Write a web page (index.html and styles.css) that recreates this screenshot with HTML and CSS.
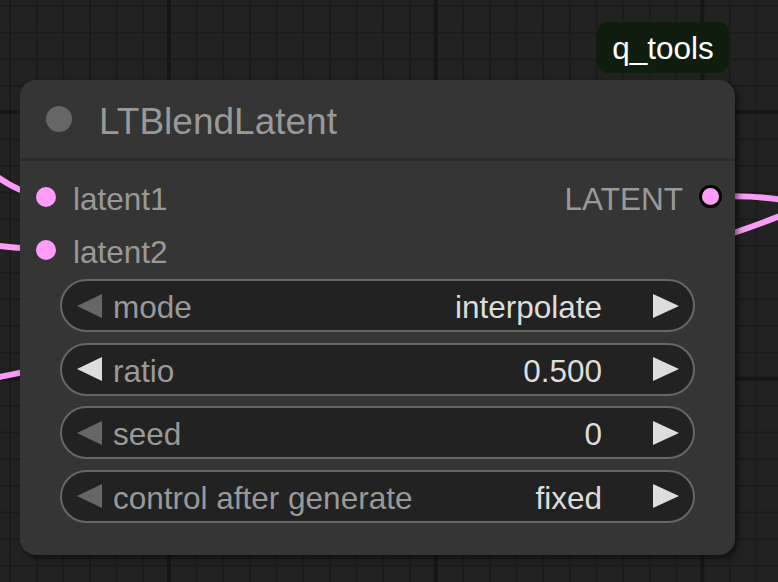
FILE: index.html
```html
<!DOCTYPE html>
<html>
<head>
<meta charset="utf-8">
<link rel="stylesheet" href="styles.css">
</head>
<body>
<div class="canvas">
  <svg class="wires" width="778" height="582" viewBox="0 0 778 582">
    <path d="M -30 158 C -5 174, 10 190, 40 196" />
    <path d="M -10 245 C 10 247, 25 249, 40 249" />
    <path d="M -10 379 C 10 375, 25 371, 40 370" />
    <path d="M 711 196 C 740 196, 760 196, 790 201" />
    <path d="M 711 240 C 735 233, 760 224, 790 212" />
  </svg>

  <div class="badge">q_tools</div>

  <div class="node">
    <div class="node-title">
      <span class="title-dot"></span>
      <span class="title-text">LTBlendLatent</span>
    </div>
    <div class="node-body">
      <div class="slot-row">
        <div class="slot-in"><span class="dot"></span><span class="slot-label">latent1</span></div>
        <div class="slot-out"><span class="slot-label">LATENT</span><span class="dot dot-out"></span></div>
      </div>
      <div class="slot-row">
        <div class="slot-in"><span class="dot"></span><span class="slot-label">latent2</span></div>
      </div>
      <div class="widgets">
        <div class="widget">
          <span class="arrow-left dim"></span>
          <span class="w-label">mode</span>
          <span class="w-value">interpolate</span>
          <span class="arrow-right"></span>
        </div>
        <div class="widget">
          <span class="arrow-left"></span>
          <span class="w-label">ratio</span>
          <span class="w-value">0.500</span>
          <span class="arrow-right"></span>
        </div>
        <div class="widget">
          <span class="arrow-left dim"></span>
          <span class="w-label">seed</span>
          <span class="w-value">0</span>
          <span class="arrow-right"></span>
        </div>
        <div class="widget">
          <span class="arrow-left dim"></span>
          <span class="w-label">control after generate</span>
          <span class="w-value">fixed</span>
          <span class="arrow-right"></span>
        </div>
      </div>
    </div>
  </div>
</div>
</body>
</html>
```

FILE: styles.css
```css
html, body {
  margin: 0;
  padding: 0;
  background: #222222;
}

.canvas {
  position: relative;
  width: 778px;
  height: 582px;
  overflow: hidden;
  font-family: "Liberation Sans", Arial, sans-serif;
  background-color: #222222;
  background-image:
    linear-gradient(to right, #161616 0 4px, transparent 4px),
    linear-gradient(to bottom, #161616 0 4px, transparent 4px),
    linear-gradient(to right, #1b1b1b 0 2px, transparent 2px),
    linear-gradient(to bottom, #1b1b1b 0 2px, transparent 2px);
  background-size:
    266.667px 100%,
    100% 266.667px,
    26.667px 100%,
    100% 26.667px;
  background-position:
    167px 0,
    0 110px,
    9px 0,
    0 5px;
}

.wires {
  position: absolute;
  left: 0;
  top: 0;
}

.wires path {
  fill: none;
  stroke: #fa9cf6;
  stroke-width: 6;
}

.badge {
  position: absolute;
  left: 597px;
  top: 22px;
  width: 132px;
  height: 51px;
  border-radius: 11px;
  background: #0e1d0e;
  color: #ffffff;
  font-size: 31.5px;
  display: flex;
  align-items: center;
  justify-content: center;
  padding-top: 2px;
  box-sizing: border-box;
}

.node {
  position: absolute;
  left: 20px;
  top: 80px;
  width: 715px;
  height: 475px;
  border-radius: 16px;
  background: #353535;
  box-shadow: 3px 3px 6px rgba(0, 0, 0, 0.55);
  display: flex;
  flex-direction: column;
}

.node-title {
  height: 78px;
  border-bottom: 3px solid #2b2b2b;
  display: flex;
  align-items: center;
  padding-left: 26px;
  gap: 28px;
}

.title-dot {
  width: 26px;
  height: 26px;
  border-radius: 50%;
  background: #666666;
}

.title-text {
  color: #999999;
  font-size: 37px;
  padding-top: 5px;
  margin-left: -1px;
}

.node-body {
  padding-top: 9px;
  display: flex;
  flex-direction: column;
}

.slot-row {
  height: 53px;
  display: flex;
  align-items: center;
  justify-content: space-between;
}

.slot-in {
  display: flex;
  align-items: center;
  padding-left: 16px;
  gap: 17px;
}

.slot-out {
  display: flex;
  align-items: center;
  padding-right: 13px;
  gap: 16px;
}

.dot {
  width: 20px;
  height: 20px;
  border-radius: 50%;
  background: #ff9cf9;
}

.dot-out {
  box-sizing: border-box;
  width: 23px;
  height: 23px;
  border: 3px solid #000000;
}

.slot-label {
  color: #999999;
  font-size: 31.5px;
  padding-top: 5px;
}

.widgets {
  margin-top: 3px;
  padding: 0 40px;
  display: flex;
  flex-direction: column;
  gap: 10.6px;
}

.widget {
  box-sizing: border-box;
  height: 53px;
  border: 2px solid #666666;
  border-radius: 27px;
  background: #222222;
  display: flex;
  align-items: center;
  padding-left: 15px;
  padding-right: 14px;
  font-size: 31.5px;
}

.arrow-left {
  width: 0;
  height: 0;
  border-top: 12.5px solid transparent;
  border-bottom: 12.5px solid transparent;
  border-right: 25px solid #dddddd;
}

.arrow-left.dim {
  border-right-color: #666666;
}

.arrow-right {
  width: 0;
  height: 0;
  border-top: 12.5px solid transparent;
  border-bottom: 12.5px solid transparent;
  border-left: 26px solid #dddddd;
}

.w-label {
  color: #999999;
  margin-left: 11px;
  flex: 1;
  white-space: nowrap;
  padding-top: 4px;
}

.w-value {
  color: #dddddd;
  margin-right: 51px;
  white-space: nowrap;
  padding-top: 4px;
}
```
